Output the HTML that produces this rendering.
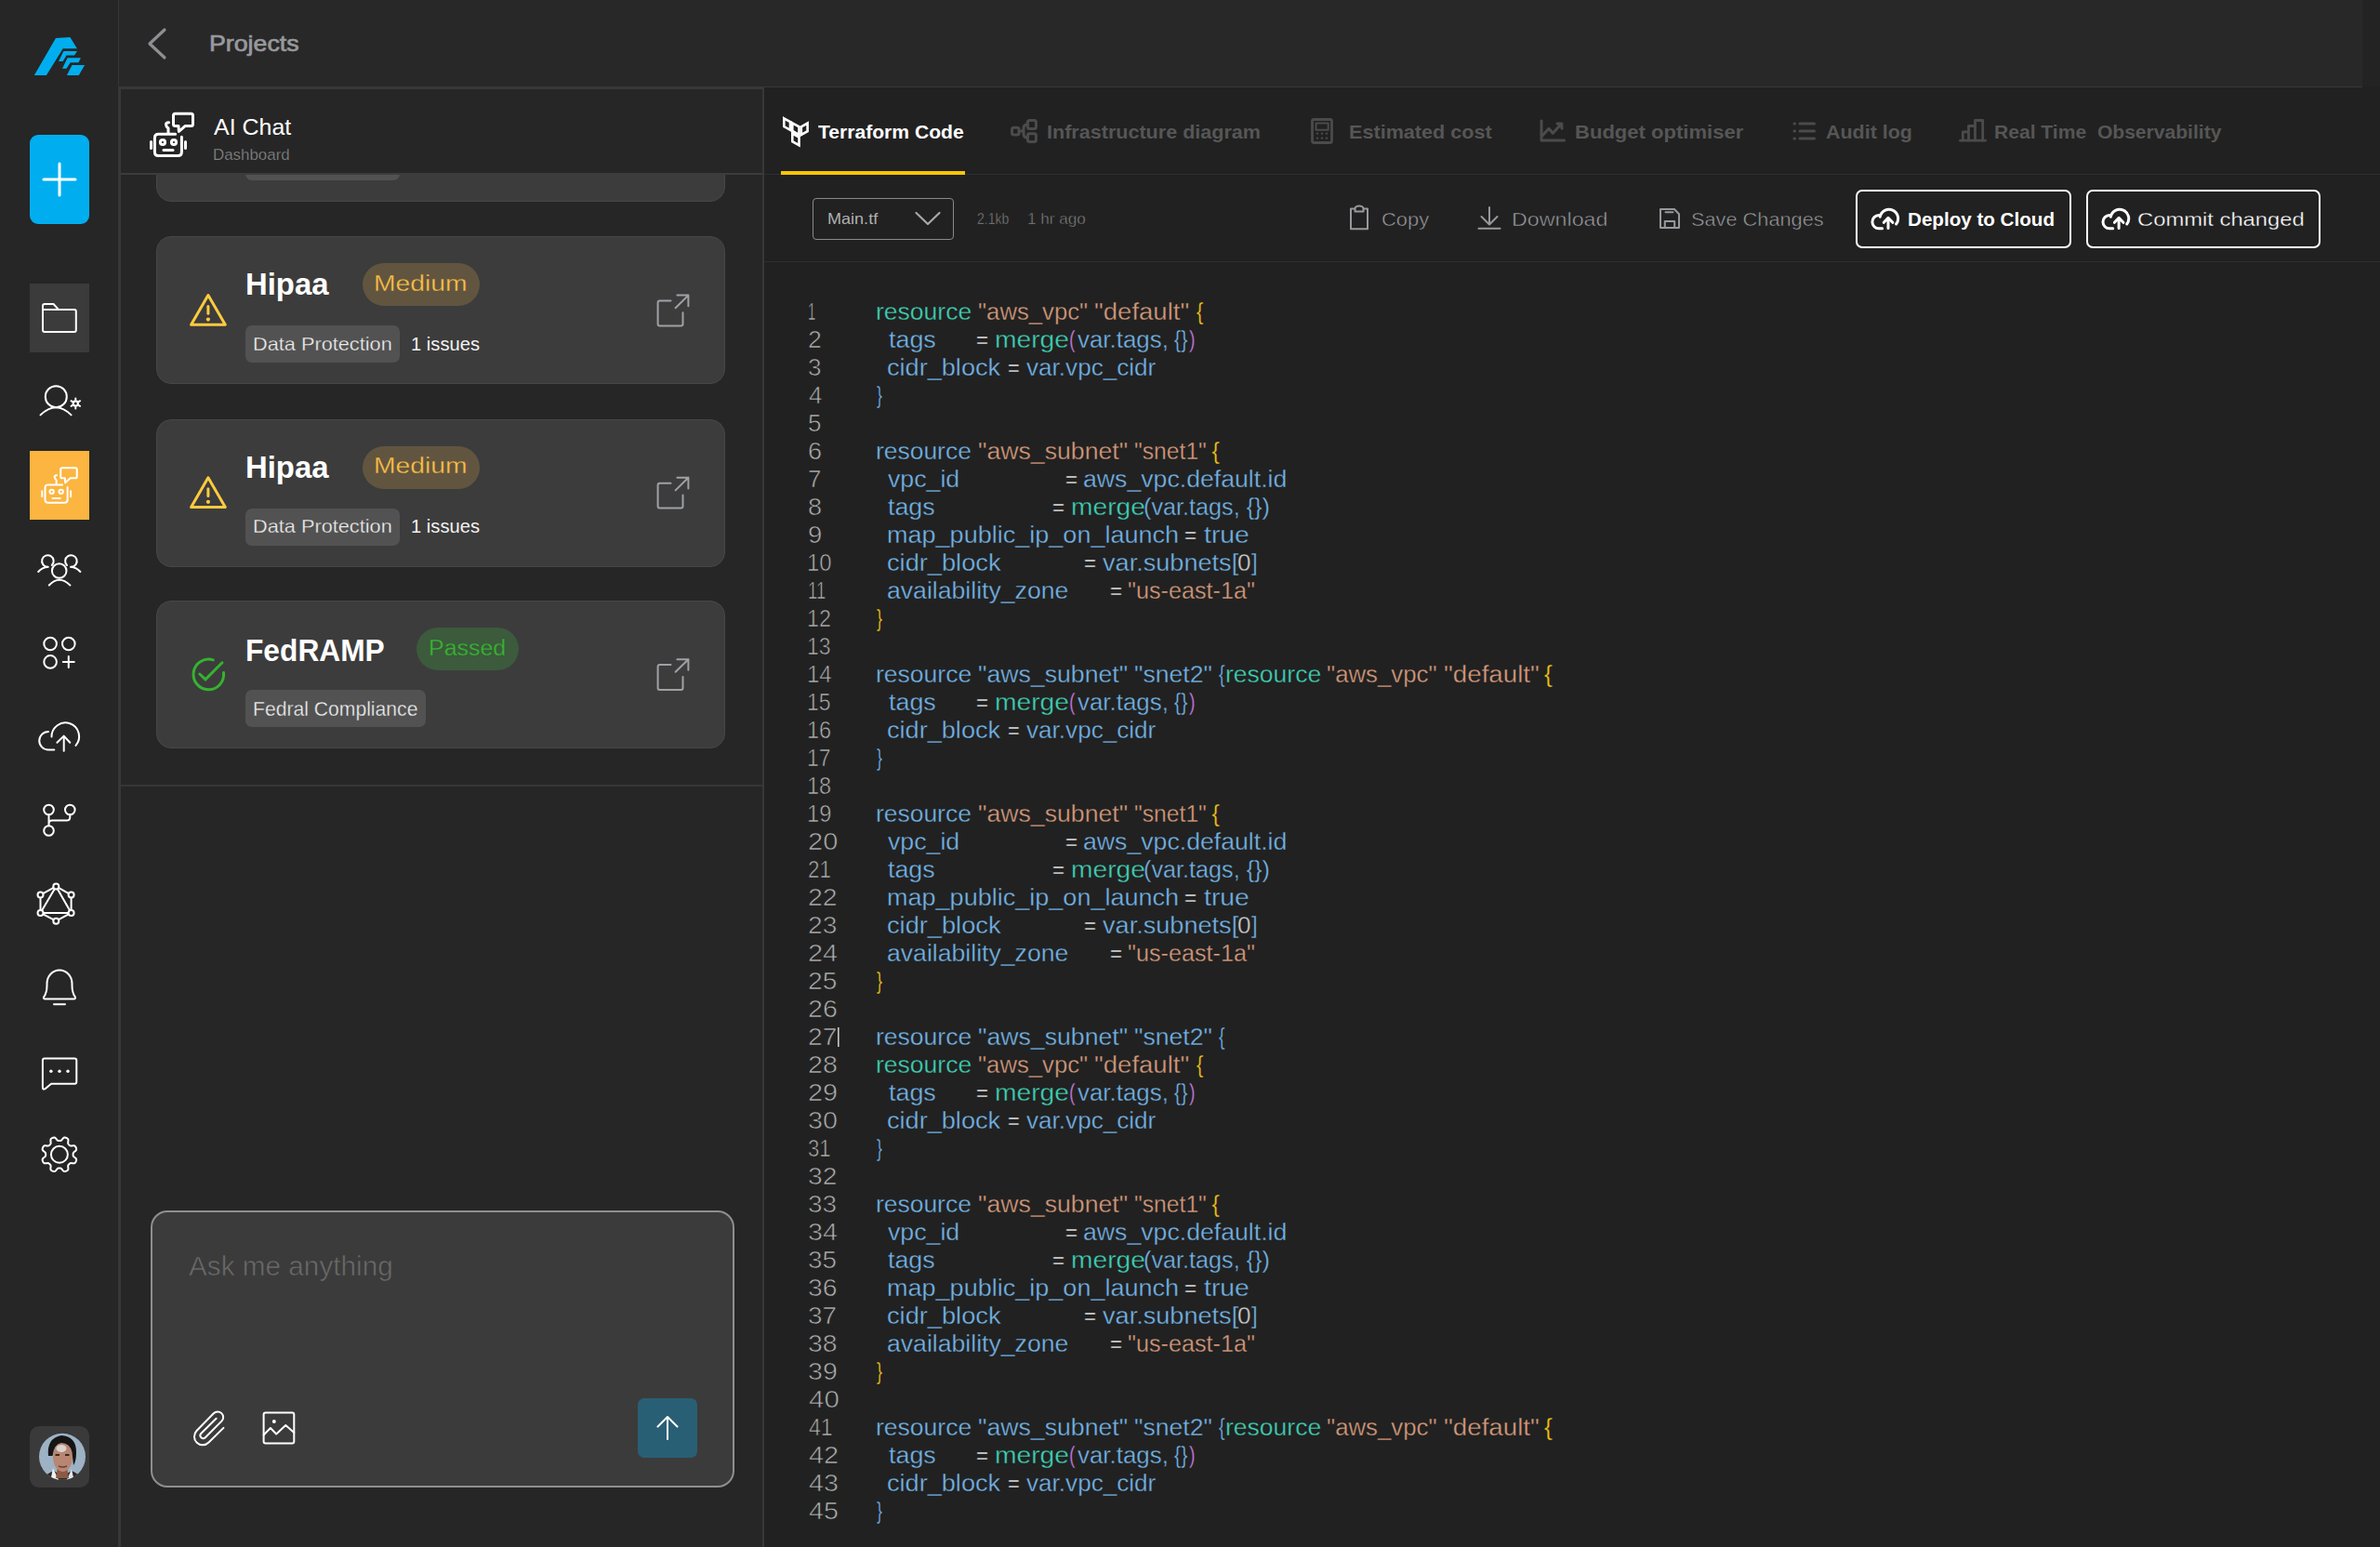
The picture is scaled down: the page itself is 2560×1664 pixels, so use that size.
<!DOCTYPE html>
<html><head><meta charset="utf-8"><style>
html,body{margin:0;padding:0;width:2560px;height:1664px;overflow:hidden;background:#212121;font-family:"Liberation Sans",sans-serif;}
.a{position:absolute;box-sizing:border-box;}
.t{position:absolute;white-space:pre;line-height:1;transform-origin:0 0;}
</style></head><body>
<div class="a" style="left:0;top:0;width:127px;height:1664px;background:#262626"></div>
<div class="a" style="left:127px;top:0;width:1px;height:1664px;background:#363638"></div>
<div class="a" style="left:128px;top:0;width:2413px;height:93px;background:#282828"></div>
<div class="a" style="left:2541px;top:0;width:19px;height:93px;background:#232323"></div>
<div class="a" style="left:128px;top:93px;width:2413px;height:1px;background:#38383a"></div>
<div class="a" style="left:128px;top:94px;width:694px;height:1570px;background:#262626"></div>
<div class="a" style="left:128px;top:93px;width:694px;height:3px;background:#38383a"></div>
<div class="a" style="left:128px;top:93px;width:2px;height:1571px;background:#38383a"></div>
<div class="a" style="left:820px;top:93px;width:2px;height:1571px;background:#38383a"></div>
<div class="a" style="left:822px;top:94px;width:1738px;height:1570px;background:#212121"></div>
<div class="a" style="left:822px;top:187px;width:1738px;height:1px;background:#2b3033"></div>
<div class="a" style="left:822px;top:281px;width:1738px;height:1px;background:#2b3033"></div>
<div class="a" style="left:840px;top:184px;width:198px;height:4px;background:#f9c606"></div>
<div class="a" style="left:130px;top:188px;width:690px;height:657px;overflow:hidden"><div class="a" style="left:38px;top:-130.0px;width:612px;height:159px;background:#3c3c3c;border:1.5px solid #474747;border-radius:16px"></div><div class="a" style="left:134px;top:-34.0px;width:166px;height:40px;background:#525252;border-radius:7px"></div><div class="a" style="left:38px;top:66.4px;width:612px;height:159px;background:#3c3c3c;border:1.5px solid #474747;border-radius:16px"></div><div class="a" style="left:134px;top:162.4px;width:166px;height:40px;background:#525252;border-radius:7px"></div><div class="a" style="left:260px;top:95.4px;width:126px;height:46px;background:#625540;border-radius:23px"></div><div class="a" style="left:38px;top:262.6px;width:612px;height:159px;background:#3c3c3c;border:1.5px solid #474747;border-radius:16px"></div><div class="a" style="left:134px;top:358.6px;width:166px;height:40px;background:#525252;border-radius:7px"></div><div class="a" style="left:260px;top:291.6px;width:126px;height:46px;background:#625540;border-radius:23px"></div><div class="a" style="left:38px;top:458.0px;width:612px;height:159px;background:#3c3c3c;border:1.5px solid #474747;border-radius:16px"></div><div class="a" style="left:134px;top:554.0px;width:194px;height:40px;background:#525252;border-radius:7px"></div><div class="a" style="left:318px;top:487.0px;width:110px;height:46px;background:#3c5a3c;border-radius:23px"></div></div>
<div class="a" style="left:130px;top:186px;width:690px;height:2px;background:#3c3c3c"></div>
<div class="a" style="left:130px;top:844px;width:690px;height:2px;background:#363636"></div>
<div class="a" style="left:162px;top:1302px;width:628px;height:298px;background:#3b3b3b;border:2px solid #8f8f8f;border-radius:18px"></div>
<div class="a" style="left:686px;top:1504px;width:64px;height:64px;background:#295f75;border-radius:7px"></div>
<div class="a" style="left:32px;top:145px;width:64px;height:96px;background:#00aeef;border-radius:9px"></div>
<div class="a" style="left:32px;top:305px;width:64px;height:74px;background:#3b3b3b"></div>
<div class="a" style="left:32px;top:485px;width:64px;height:74px;background:#fcb540"></div>
<div class="a" style="left:32px;top:1534px;width:64px;height:66px;background:#3a3a3a;border-radius:10px"></div>
<div class="a" style="left:874px;top:212.5px;width:152px;height:45px;border:1.5px solid #8a8a8a;border-radius:4px"></div>
<div class="a" style="left:1996px;top:203.5px;width:232px;height:63px;border:2px solid #ffffff;border-radius:7px"></div>
<div class="a" style="left:2244px;top:203.5px;width:252px;height:63px;border:2px solid #ffffff;border-radius:7px"></div>
<svg class="a" style="left:0;top:0" width="2560" height="1664" viewBox="0 0 2560 1664"><g fill="#00aeef"><path d="M36.8 81 L49.9 81 L67.7 52.2 L82.9 52.2 L75.4 40.1 L60 41 Z"/><path d="M63 66 L67.7 66 L71.5 59.5 L80 59.5 L83 55.1 L68.4 55.1 Z"/><path d="M67 73.8 L71.5 73.8 L75.7 67.3 L84.5 67.3 L86.9 62.3 L72.6 62.3 Z"/><path d="M71.9 81 L84.8 81 L91.1 70 L77.5 70 Z"/></g>
<g stroke="#ffffff" stroke-width="3" stroke-linecap="round"><path d="M64 176 L64 210 M47 193 L81 193"/></g>
<path d="M177 32 L161 47 L177 62" fill="none" stroke="#8e8f93" stroke-width="3.2" stroke-linecap="round" stroke-linejoin="round"/>
<path d="M46 329 Q46 327 48 327 L57.5 327 L63.2 333.1 L80 333.1 Q81.8 333.1 81.8 335 L81.8 355 Q81.8 357 80 357 L48 357 Q46 357 46 355 Z M46 333.1 L63.2 333.1" fill="none" stroke="#ffffff" stroke-linecap="round" stroke-linejoin="round" stroke-width="2"/>
<circle cx="60.3" cy="426.7" r="11.5" fill="none" stroke="#ffffff" stroke-linecap="round" stroke-linejoin="round" stroke-width="2"/><path d="M43.5 446.4 Q60.3 430 76.6 446.4" fill="none" stroke="#ffffff" stroke-linecap="round" stroke-linejoin="round" stroke-width="2"/><circle cx="81.3" cy="434" r="2.6" fill="none" stroke="#ffffff" stroke-linecap="round" stroke-linejoin="round" stroke-width="2.2"/><g stroke="#fff" stroke-width="2" stroke-linecap="round"><path d="M81.3 428.5 L81.3 429.8 M81.3 438.2 L81.3 439.5 M76.5 431.2 L77.7 431.9 M84.9 436.1 L86.1 436.8 M76.5 436.8 L77.7 436.1 M84.9 431.9 L86.1 431.2"/></g>
<g transform="translate(0,0) scale(1)" fill="none" stroke="#ffffff" stroke-linecap="round" stroke-linejoin="round" stroke-width="3"><path d="M188.7 144.2 L170.4 144.2 Q166.4 144.2 166.4 148.2 L166.4 163.4 Q166.4 167.4 170.4 167.4 L191.4 167.4 Q195.4 167.4 195.4 163.4 L195.4 147.2"/><path d="M162.5 152.4 L162.5 159.6 M199.5 152.4 L199.5 159.6"/><circle cx="175" cy="153" r="2.6"/><circle cx="187" cy="153" r="2.6"/><path d="M176 161.5 L186 161.5"/><path d="M181 143 L181 138 Q178.5 136 178.5 134 Q178.5 132 181.5 131.8"/><path d="M189 122.3 L205.5 122.3 Q207.5 122.3 207.5 124.3 L207.5 133.6 Q207.5 135.6 205.5 135.6 L199 135.6 L192.4 141.5 L192 135.6 L188.5 135.6 Q186.5 135.6 186.5 133.6 L186.5 124.3 Q186.5 122.3 188.5 122.3 Z"/></g>
<g transform="translate(-90.113,401.3736) scale(0.833)" fill="none" stroke="#ffffff" stroke-linecap="round" stroke-linejoin="round" stroke-width="2.4"><path d="M188.7 144.2 L170.4 144.2 Q166.4 144.2 166.4 148.2 L166.4 163.4 Q166.4 167.4 170.4 167.4 L191.4 167.4 Q195.4 167.4 195.4 163.4 L195.4 147.2"/><path d="M162.5 152.4 L162.5 159.6 M199.5 152.4 L199.5 159.6"/><circle cx="175" cy="153" r="2.6"/><circle cx="187" cy="153" r="2.6"/><path d="M176 161.5 L186 161.5"/><path d="M181 143 L181 138 Q178.5 136 178.5 134 Q178.5 132 181.5 131.8"/><path d="M189 122.3 L205.5 122.3 Q207.5 122.3 207.5 124.3 L207.5 133.6 Q207.5 135.6 205.5 135.6 L199 135.6 L192.4 141.5 L192 135.6 L188.5 135.6 Q186.5 135.6 186.5 133.6 L186.5 124.3 Q186.5 122.3 188.5 122.3 Z"/></g>
<g fill="none" stroke="#ffffff" stroke-linecap="round" stroke-linejoin="round" stroke-width="2"><circle cx="63.7" cy="614" r="7.8"/><path d="M52.8 629.5 Q63.7 618 75.4 629.5"/><path d="M55.8 608 A6.3 6.3 0 1 0 51 609.8"/><path d="M41.2 615 Q45 610.5 51.8 609.8"/><path d="M72 608 A6.3 6.3 0 1 1 76.8 609.8"/><path d="M86.4 615 Q82.5 610.5 76 609.8"/></g>
<g fill="none" stroke="#ffffff" stroke-linecap="round" stroke-linejoin="round" stroke-width="2"><circle cx="54.1" cy="692.5" r="6.8"/><circle cx="73.8" cy="692.5" r="6.8"/><circle cx="54.1" cy="711.9" r="6.8"/><path d="M73.8 705.9 L73.8 717.9 M67.8 711.9 L79.8 711.9"/></g>
<g fill="none" stroke="#ffffff" stroke-linecap="round" stroke-linejoin="round" stroke-width="2"><path d="M55.5 792.5 A14.8 14.8 0 1 1 81.5 801.9"/><path d="M52 787 A9.7 9.7 0 0 0 52 806.5 L58.3 806.5"/><path d="M68.7 807.8 L68.7 792 M61.4 798.8 L68.7 791.6 L75.3 798.8"/></g>
<g fill="none" stroke="#ffffff" stroke-linecap="round" stroke-linejoin="round" stroke-width="2"><circle cx="52.5" cy="871" r="5.3"/><circle cx="75.3" cy="871" r="5.3"/><circle cx="52.5" cy="893.5" r="5.3"/><path d="M52.5 876.3 L52.5 888.2 M75.3 876.3 L75.3 879 Q75.3 882.6 71.5 882.6 L56 882.6 Q52.5 882.6 52.5 886"/></g>
<g fill="none" stroke="#ffffff" stroke-linecap="round" stroke-linejoin="round" stroke-width="2"><path d="M60.3 953.4 L76.6 962.6 L76.6 981.9 L60.3 990.7 L43.5 981.9 L43.5 962.6 Z M60.3 953.4 L43.5 981.9 L76.6 981.9 Z"/></g><g fill="#262626" stroke="#fff" stroke-width="2"><circle cx="60.3" cy="953.4" r="3"/><circle cx="43.5" cy="962.6" r="3"/><circle cx="76.6" cy="962.6" r="3"/><circle cx="43.5" cy="981.9" r="3"/><circle cx="76.6" cy="981.9" r="3"/><circle cx="60.3" cy="990.7" r="3"/></g>
<g fill="none" stroke="#ffffff" stroke-linecap="round" stroke-linejoin="round" stroke-width="2"><path d="M50.5 1060 L50.5 1058 A13.5 14.5 0 0 1 77.5 1058 L77.5 1060 Q77.5 1068 81 1072.5 Q81.5 1074.5 79.5 1074.5 L48.5 1074.5 Q46.5 1074.5 47 1072.5 Q50.5 1068 50.5 1060 Z"/><path d="M58 1080.2 L70 1080.2"/></g>
<g fill="none" stroke="#ffffff" stroke-linecap="round" stroke-linejoin="round" stroke-width="2"><path d="M47.9 1138.6 L80.3 1138.6 Q82.3 1138.6 82.3 1140.6 L82.3 1163.7 Q82.3 1165.7 80.3 1165.7 L55.1 1165.7 L48.5 1171.2 Q45.9 1172.5 45.9 1169.5 L45.9 1140.6 Q45.9 1138.6 47.9 1138.6 Z"/></g><g fill="#fff"><circle cx="54.9" cy="1152.3" r="1.7"/><circle cx="64" cy="1152.3" r="1.7"/><circle cx="73" cy="1152.3" r="1.7"/></g>
<path d="M78.60 1241.80 L78.61 1242.19 L78.63 1242.57 L78.68 1242.96 L78.79 1243.36 L79.03 1243.79 L79.48 1244.27 L80.17 1244.82 L80.97 1245.43 L81.62 1246.06 L82.00 1246.65 L82.14 1247.20 L82.14 1247.73 L82.05 1248.23 L81.91 1248.71 L81.73 1249.19 L81.52 1249.65 L81.28 1250.09 L80.99 1250.51 L80.62 1250.88 L80.13 1251.17 L79.44 1251.32 L78.54 1251.30 L77.54 1251.17 L76.66 1251.07 L76.01 1251.09 L75.54 1251.22 L75.17 1251.43 L74.86 1251.67 L74.57 1251.93 L74.29 1252.19 L74.03 1252.47 L73.77 1252.76 L73.53 1253.07 L73.32 1253.44 L73.19 1253.91 L73.17 1254.56 L73.27 1255.44 L73.40 1256.44 L73.42 1257.34 L73.27 1258.03 L72.98 1258.52 L72.61 1258.89 L72.19 1259.18 L71.75 1259.42 L71.29 1259.63 L70.81 1259.81 L70.33 1259.95 L69.83 1260.04 L69.30 1260.04 L68.75 1259.90 L68.16 1259.52 L67.53 1258.87 L66.92 1258.07 L66.37 1257.38 L65.89 1256.93 L65.46 1256.69 L65.06 1256.58 L64.67 1256.53 L64.29 1256.51 L63.90 1256.50 L63.51 1256.51 L63.13 1256.53 L62.74 1256.58 L62.34 1256.69 L61.91 1256.93 L61.43 1257.38 L60.88 1258.07 L60.27 1258.87 L59.64 1259.52 L59.05 1259.90 L58.50 1260.04 L57.97 1260.04 L57.47 1259.95 L56.99 1259.81 L56.51 1259.63 L56.05 1259.42 L55.61 1259.18 L55.19 1258.89 L54.82 1258.52 L54.53 1258.03 L54.38 1257.34 L54.40 1256.44 L54.53 1255.44 L54.63 1254.56 L54.61 1253.91 L54.48 1253.44 L54.27 1253.07 L54.03 1252.76 L53.77 1252.47 L53.51 1252.19 L53.23 1251.93 L52.94 1251.67 L52.63 1251.43 L52.26 1251.22 L51.79 1251.09 L51.14 1251.07 L50.26 1251.17 L49.26 1251.30 L48.36 1251.32 L47.67 1251.17 L47.18 1250.88 L46.81 1250.51 L46.52 1250.09 L46.28 1249.65 L46.07 1249.19 L45.89 1248.71 L45.75 1248.23 L45.66 1247.73 L45.66 1247.20 L45.80 1246.65 L46.18 1246.06 L46.83 1245.43 L47.63 1244.82 L48.32 1244.27 L48.77 1243.79 L49.01 1243.36 L49.12 1242.96 L49.17 1242.57 L49.19 1242.19 L49.20 1241.80 L49.19 1241.41 L49.17 1241.03 L49.12 1240.64 L49.01 1240.24 L48.77 1239.81 L48.32 1239.33 L47.63 1238.78 L46.83 1238.17 L46.18 1237.54 L45.80 1236.95 L45.66 1236.40 L45.66 1235.87 L45.75 1235.37 L45.89 1234.89 L46.07 1234.41 L46.28 1233.95 L46.52 1233.51 L46.81 1233.09 L47.18 1232.72 L47.67 1232.43 L48.36 1232.28 L49.26 1232.30 L50.26 1232.43 L51.14 1232.53 L51.79 1232.51 L52.26 1232.38 L52.63 1232.17 L52.94 1231.93 L53.23 1231.67 L53.51 1231.41 L53.77 1231.13 L54.03 1230.84 L54.27 1230.53 L54.48 1230.16 L54.61 1229.69 L54.63 1229.04 L54.53 1228.16 L54.40 1227.16 L54.38 1226.26 L54.53 1225.57 L54.82 1225.08 L55.19 1224.71 L55.61 1224.42 L56.05 1224.18 L56.51 1223.97 L56.99 1223.79 L57.47 1223.65 L57.97 1223.56 L58.50 1223.56 L59.05 1223.70 L59.64 1224.08 L60.27 1224.73 L60.88 1225.53 L61.43 1226.22 L61.91 1226.67 L62.34 1226.91 L62.74 1227.02 L63.13 1227.07 L63.51 1227.09 L63.90 1227.10 L64.29 1227.09 L64.67 1227.07 L65.06 1227.02 L65.46 1226.91 L65.89 1226.67 L66.37 1226.22 L66.92 1225.53 L67.53 1224.73 L68.16 1224.08 L68.75 1223.70 L69.30 1223.56 L69.83 1223.56 L70.33 1223.65 L70.81 1223.79 L71.29 1223.97 L71.75 1224.18 L72.19 1224.42 L72.61 1224.71 L72.98 1225.08 L73.27 1225.57 L73.42 1226.26 L73.40 1227.16 L73.27 1228.16 L73.17 1229.04 L73.19 1229.69 L73.32 1230.16 L73.53 1230.53 L73.77 1230.84 L74.03 1231.13 L74.29 1231.41 L74.57 1231.67 L74.86 1231.93 L75.17 1232.17 L75.54 1232.38 L76.01 1232.51 L76.66 1232.53 L77.54 1232.43 L78.54 1232.30 L79.44 1232.28 L80.13 1232.43 L80.62 1232.72 L80.99 1233.09 L81.28 1233.51 L81.52 1233.95 L81.73 1234.41 L81.91 1234.89 L82.05 1235.37 L82.14 1235.87 L82.14 1236.40 L82.00 1236.95 L81.62 1237.54 L80.97 1238.17 L80.17 1238.78 L79.48 1239.33 L79.03 1239.81 L78.79 1240.24 L78.68 1240.64 L78.63 1241.03 L78.61 1241.41 Z" fill="none" stroke="#ffffff" stroke-linecap="round" stroke-linejoin="round" stroke-width="2"/><circle cx="63.9" cy="1241.8" r="9" fill="none" stroke="#ffffff" stroke-linecap="round" stroke-linejoin="round" stroke-width="2"/>
<defs><clipPath id="av"><circle cx="67" cy="1566.8" r="25"/></clipPath></defs><g clip-path="url(#av)"><rect x="40" y="1540" width="55" height="55" fill="#9db2c4"/><path d="M42 1600 Q46 1586 58 1582 L67 1588 L77 1582 Q88 1586 92 1600 Z" fill="#2e2724"/><path d="M57 1579 L64 1594 L54 1594 Z" fill="#f0f0f0"/><path d="M77 1580 L71 1594 L80 1594 Z" fill="#dfe6ee"/><path d="M62 1578 L72 1578 L74 1590 L60 1590 Z" fill="#8a5a44"/><ellipse cx="67.5" cy="1567" rx="10.5" ry="16" fill="#b98672"/><path d="M52 1566 Q50 1547 66 1544 Q82 1545 82 1562 Q82 1572 79 1576 L77.5 1562 Q75 1552 66 1552 Q58 1553 56.5 1566 Z" fill="#151515"/><ellipse cx="66" cy="1558" rx="5.5" ry="4" fill="#d9d3cf"/><path d="M59.5 1565 L64 1565 M70 1565 L74.5 1565" stroke="#3a2a22" stroke-width="2"/><path d="M63 1577 Q67.5 1579 72 1577" stroke="#6e3f3a" stroke-width="1.5" fill="none"/></g>
<g transform="translate(0,0.0)" fill="none" stroke="#fdcb3e" stroke-width="3" stroke-linecap="round" stroke-linejoin="round"><path d="M223.9 317.5 L242.3 349.3 L205.6 349.3 Z"/><path d="M223.9 329.5 L223.9 337.2"/></g><circle cx="223.9" cy="343.6" r="2.1" fill="#fdcb3e"/>
<g transform="translate(0,0.0)" fill="none" stroke="#a0a1a5" stroke-width="2" stroke-linecap="round" stroke-linejoin="round"><path d="M721.5 323.5 L709.6 323.5 Q707.6 323.5 707.6 325.5 L707.6 348.4 Q707.6 350.4 709.6 350.4 L732.5 350.4 Q734.5 350.4 734.5 348.4 L734.5 336.3"/><path d="M726.6 331.2 L740.4 317.6 M728.4 317.6 L740.4 317.6 L740.4 329.2"/></g>
<g transform="translate(0,196.20000000000002)" fill="none" stroke="#fdcb3e" stroke-width="3" stroke-linecap="round" stroke-linejoin="round"><path d="M223.9 317.5 L242.3 349.3 L205.6 349.3 Z"/><path d="M223.9 329.5 L223.9 337.2"/></g><circle cx="223.9" cy="539.8000000000001" r="2.1" fill="#fdcb3e"/>
<g transform="translate(0,196.20000000000002)" fill="none" stroke="#a0a1a5" stroke-width="2" stroke-linecap="round" stroke-linejoin="round"><path d="M721.5 323.5 L709.6 323.5 Q707.6 323.5 707.6 325.5 L707.6 348.4 Q707.6 350.4 709.6 350.4 L732.5 350.4 Q734.5 350.4 734.5 348.4 L734.5 336.3"/><path d="M726.6 331.2 L740.4 317.6 M728.4 317.6 L740.4 317.6 L740.4 329.2"/></g>
<g transform="translate(0,391.6)" fill="none" stroke="#a0a1a5" stroke-width="2" stroke-linecap="round" stroke-linejoin="round"><path d="M721.5 323.5 L709.6 323.5 Q707.6 323.5 707.6 325.5 L707.6 348.4 Q707.6 350.4 709.6 350.4 L732.5 350.4 Q734.5 350.4 734.5 348.4 L734.5 336.3"/><path d="M726.6 331.2 L740.4 317.6 M728.4 317.6 L740.4 317.6 L740.4 329.2"/></g>
<g fill="none" stroke="#35b22f" stroke-width="3" stroke-linecap="round"><path d="M229.3 709.9 A16.3 16.3 0 1 0 240.5 723.5"/><path d="M214.8 725 L221 730.9 L239 712.8"/></g>
<g fill="none" stroke="#ffffff" stroke-linecap="round" stroke-linejoin="round" stroke-width="2"><path d="M240.4 1535.9 L224.5 1551.5 A9 9 0 0 1 211.5 1539 L229.8 1520.2 A6 6 0 0 1 238.4 1528.6 L220.8 1546.2 A3 3 0 0 1 216.4 1541.8 L232.6 1525.8"/></g>
<g fill="none" stroke="#ffffff" stroke-linecap="round" stroke-linejoin="round" stroke-width="2"><rect x="283.6" y="1519.5" width="32.7" height="33" rx="2"/><path d="M283.6 1543.5 L290.9 1536 L297.2 1542.5 L307.3 1533 L316.3 1541"/></g><circle cx="294.8" cy="1529" r="2" fill="#fff"/>
<g fill="none" stroke="#ffffff" stroke-linecap="round" stroke-linejoin="round" stroke-width="2"><path d="M718 1548 L718 1524 M707.5 1534.5 L718 1524 L728.5 1534.5"/></g>
<g fill="none" stroke="#ffffff" stroke-width="2.6" stroke-linejoin="miter"><path d="M843.3 127.3 L850 131 L850 139.8 L843.3 136.1 Z"/><path d="M852.3 132.3 L859.5 136.3 L859.5 145 L852.3 141 Z"/><path d="M861.8 136.3 L868.6 132.5 L868.6 141.2 L861.8 145 Z"/><path d="M852.3 143.5 L859.5 147.5 L859.5 156.2 L852.3 152.2 Z"/></g>
<g fill="none" stroke="#4b4b4b" stroke-linecap="round" stroke-linejoin="round" stroke-width="3"><rect x="1088.5" y="137.2" width="7.5" height="7.7" rx="2"/><rect x="1105.4" y="129.4" width="9" height="9" rx="2"/><rect x="1105.4" y="143.8" width="9" height="8.8" rx="2"/><path d="M1096 141 L1101 141 M1105 134 Q1101 134 1101 138 L1101 144 Q1101 148 1105 148"/></g>
<g fill="none" stroke="#4b4b4b" stroke-linecap="round" stroke-linejoin="round" stroke-width="2.8"><rect x="1411.5" y="128.5" width="21" height="25" rx="2"/></g><g fill="none" stroke="#4b4b4b" stroke-linecap="round" stroke-linejoin="round" stroke-width="2"><rect x="1415.5" y="132.5" width="13.2" height="7.2"/></g><g fill="#4b4b4b"><circle cx="1417" cy="143.6" r="1.2"/><circle cx="1422" cy="143.6" r="1.2"/><circle cx="1427" cy="143.6" r="1.2"/><circle cx="1417" cy="148.6" r="1.2"/><circle cx="1422" cy="148.6" r="1.2"/><circle cx="1427" cy="148.6" r="1.2"/></g>
<g fill="none" stroke="#4b4b4b" stroke-linecap="round" stroke-linejoin="round" stroke-width="3"><path d="M1658 130 L1658 151 L1682.5 151 M1658 147 L1666 138.3 L1670.3 143.3 L1679.5 133.3 M1675 133 L1679.8 133 L1680 138.3"/></g>
<g fill="none" stroke="#4b4b4b" stroke-linecap="round" stroke-linejoin="round" stroke-width="3"><path d="M1930 132.9 L1930.5 132.9 M1936 132.9 L1951.5 132.9 M1930 141 L1930.5 141 M1936 141 L1951.5 141 M1930 149 L1930.5 149 M1936 149 L1951.5 149"/></g>
<g fill="none" stroke="#4b4b4b" stroke-linecap="round" stroke-linejoin="round" stroke-width="2.8"><path d="M2108.5 151.2 L2135.5 151.2" transform="translate(0,0)"/></g>
<g fill="none" stroke="#4b4b4b" stroke-linecap="round" stroke-linejoin="round" stroke-width="2.8"><path d="M2111.3 151 L2111.3 141.8 L2117.5 141.8 L2117.5 151 M2117.5 141.8 L2117.5 135.5 L2124.5 135.5 L2124.5 151 M2124.5 135.5 L2124.5 129.5 L2132.7 129.5 L2132.7 151"/></g>
<g fill="none" stroke="#98999d" stroke-linecap="round" stroke-linejoin="round" stroke-width="2"><path d="M1457 224.5 L1453 224.5 L1453 246.2 L1471 246.2 L1471 224.5 L1467 224.5"/><path d="M1457.5 227.5 L1466.5 227.5 L1466.5 224.5 A4.5 3 0 0 0 1457.5 224.5 Z"/></g>
<g fill="none" stroke="#98999d" stroke-linecap="round" stroke-linejoin="round" stroke-width="2"><path d="M1602 223 L1602 241 M1593.5 233 L1602 241.5 L1610.5 233 M1590.5 245.8 L1613.5 245.8"/></g>
<g fill="none" stroke="#98999d" stroke-linecap="round" stroke-linejoin="round" stroke-width="2"><path d="M1786 225 L1801 225 L1806 230.3 L1806 245 L1786 245 Z M1791.5 228.2 L1799.5 228.2 M1790.8 245 L1790.8 238 L1801.2 238 L1801.2 245"/></g>
<g transform="translate(0,0)" fill="none" stroke="#ffffff" stroke-width="3" stroke-linecap="round" stroke-linejoin="round"><path d="M2022.2 233.2 A9.8 9.8 0 1 1 2039.6 241"/><path d="M2021 231.6 A7.1 7.1 0 0 0 2021 245.8 L2024.6 245.8"/><path d="M2031 245.5 L2031 234.5 M2026.3 239.3 L2031 234.3 L2035.8 239.3"/></g>
<g transform="translate(248.0999999999999,0)" fill="none" stroke="#ffffff" stroke-width="3" stroke-linecap="round" stroke-linejoin="round"><path d="M2022.2 233.2 A9.8 9.8 0 1 1 2039.6 241"/><path d="M2021 231.6 A7.1 7.1 0 0 0 2021 245.8 L2024.6 245.8"/><path d="M2031 245.5 L2031 234.5 M2026.3 239.3 L2031 234.3 L2035.8 239.3"/></g>
<path d="M985.5 229 L998 241 L1010.5 229" fill="none" stroke="#a8a8a8" stroke-width="2.2" stroke-linecap="round" stroke-linejoin="round"/>
<rect x="901" y="1105" width="1.6" height="21" fill="#c8c8c8"/></svg>
<div class="t" style="left:225.17px;top:34.68px;font-size:24px;-webkit-text-stroke:0.7px #98999d;color:#98999d;transform:scaleX(1.1143)">Projects</div>
<div class="t" style="left:229.60px;top:125.18px;font-size:24.6px;color:#ffffff;transform:scaleX(1.0146)">AI Chat</div>
<div class="t" style="left:228.96px;top:158.10px;font-size:16.3px;-webkit-text-stroke:0.25px #262626;color:#858585;transform:scaleX(1.0385)">Dashboard</div>
<div class="t" style="left:263.96px;top:289.30px;font-size:33.9px;font-weight:700;color:#ffffff;transform:scaleX(0.9692)">Hipaa</div>
<div class="t" style="left:402.11px;top:292.99px;font-size:24.7px;-webkit-text-stroke:0.3px #625540;color:#fbbf45;transform:scaleX(1.1459)">Medium</div>
<div class="t" style="left:271.86px;top:360.21px;font-size:20.9px;-webkit-text-stroke:0.3px #525252;color:#eeeeee;transform:scaleX(1.0401)">Data Protection</div>
<div class="t" style="left:441.93px;top:360.21px;font-size:20.9px;color:#f2f2f2;transform:scaleX(0.9653)">1 issues</div>
<div class="t" style="left:263.96px;top:485.50px;font-size:33.9px;font-weight:700;color:#ffffff;transform:scaleX(0.9692)">Hipaa</div>
<div class="t" style="left:402.11px;top:489.19px;font-size:24.7px;-webkit-text-stroke:0.3px #625540;color:#fbbf45;transform:scaleX(1.1459)">Medium</div>
<div class="t" style="left:271.86px;top:556.41px;font-size:20.9px;-webkit-text-stroke:0.3px #525252;color:#eeeeee;transform:scaleX(1.0401)">Data Protection</div>
<div class="t" style="left:441.93px;top:556.41px;font-size:20.9px;color:#f2f2f2;transform:scaleX(0.9653)">1 issues</div>
<div class="t" style="left:263.73px;top:681.52px;font-size:34px;font-weight:700;color:#ffffff;transform:scaleX(0.9329)">FedRAMP</div>
<div class="t" style="left:460.98px;top:684.89px;font-size:24.7px;-webkit-text-stroke:0.3px #3c5a3c;color:#36b530;transform:scaleX(1.0101)">Passed</div>
<div class="t" style="left:272.10px;top:752.15px;font-size:21.2px;-webkit-text-stroke:0.3px #525252;color:#eeeeee;transform:scaleX(0.9977)">Fedral Compliance</div>
<div class="t" style="left:202.90px;top:1346.87px;font-size:29.8px;-webkit-text-stroke:0.6px #3b3b3b;color:#6a6a6a;transform:scaleX(0.9973)">Ask me anything</div>
<div class="t" style="left:880.00px;top:131.72px;font-size:20.3px;font-weight:700;color:#ffffff;transform:scaleX(1.0400)">Terraform Code</div>
<div class="t" style="left:1125.83px;top:131.89px;font-size:20.1px;font-weight:700;color:#565656;transform:scaleX(1.0728)">Infrastructure diagram</div>
<div class="t" style="left:1450.92px;top:131.89px;font-size:20.1px;font-weight:700;color:#565656;transform:scaleX(1.0754)">Estimated cost</div>
<div class="t" style="left:1693.90px;top:131.89px;font-size:20.1px;font-weight:700;color:#565656;transform:scaleX(1.0976)">Budget optimiser</div>
<div class="t" style="left:1964.00px;top:131.89px;font-size:20.1px;font-weight:700;color:#565656;transform:scaleX(1.0674)">Audit log</div>
<div class="t" style="left:2145.45px;top:131.89px;font-size:20.1px;font-weight:700;color:#565656;transform:scaleX(1.0487)">Real Time  Observability</div>
<div class="t" style="left:889.61px;top:226.83px;font-size:16.5px;color:#b0b0b0;transform:scaleX(1.0939)">Main.tf</div>
<div class="t" style="left:1050.90px;top:226.83px;font-size:16.5px;-webkit-text-stroke:0.5px #212121;color:#8c8c8c;transform:scaleX(0.8500)">2.1kb</div>
<div class="t" style="left:1104.66px;top:226.83px;font-size:16.5px;-webkit-text-stroke:0.5px #212121;color:#8c8c8c;transform:scaleX(1.0373)">1 hr ago</div>
<div class="t" style="left:1485.74px;top:225.76px;font-size:20.6px;-webkit-text-stroke:0.5px #212121;color:#9c9da1;transform:scaleX(1.0638)">Copy</div>
<div class="t" style="left:1626.37px;top:225.76px;font-size:20.6px;-webkit-text-stroke:0.5px #212121;color:#9c9da1;transform:scaleX(1.1300)">Download</div>
<div class="t" style="left:1819.44px;top:225.76px;font-size:20.6px;-webkit-text-stroke:0.5px #212121;color:#9c9da1;transform:scaleX(1.0560)">Save Changes</div>
<div class="t" style="left:2052.48px;top:225.82px;font-size:20.3px;font-weight:700;color:#ffffff;transform:scaleX(1.0162)">Deploy to Cloud</div>
<div class="t" style="left:2299.13px;top:225.82px;font-size:20.3px;-webkit-text-stroke:0.3px #212121;color:#ffffff;transform:scaleX(1.1722)">Commit changed</div>
<div class="t" style="left:868.82px;top:322.84px;font-size:25px;-webkit-text-stroke:0.6px #212121;color:#b0b0b0;transform:scaleX(0.5909)">1</div>
<div class="t" style="left:868.93px;top:352.84px;font-size:25px;-webkit-text-stroke:0.6px #212121;color:#b0b0b0;transform:scaleX(1.0667)">2</div>
<div class="t" style="left:868.96px;top:382.84px;font-size:25px;-webkit-text-stroke:0.6px #212121;color:#b0b0b0;transform:scaleX(1.0417)">3</div>
<div class="t" style="left:870.00px;top:412.84px;font-size:25px;-webkit-text-stroke:0.6px #212121;color:#b0b0b0;transform:scaleX(1.0357)">4</div>
<div class="t" style="left:868.96px;top:442.84px;font-size:25px;-webkit-text-stroke:0.6px #212121;color:#b0b0b0;transform:scaleX(1.0417)">5</div>
<div class="t" style="left:868.92px;top:472.84px;font-size:25px;-webkit-text-stroke:0.6px #212121;color:#b0b0b0;transform:scaleX(1.0833)">6</div>
<div class="t" style="left:868.96px;top:502.84px;font-size:25px;-webkit-text-stroke:0.6px #212121;color:#b0b0b0;transform:scaleX(1.0417)">7</div>
<div class="t" style="left:868.92px;top:532.84px;font-size:25px;-webkit-text-stroke:0.6px #212121;color:#b0b0b0;transform:scaleX(1.0833)">8</div>
<div class="t" style="left:868.90px;top:562.84px;font-size:25px;-webkit-text-stroke:0.6px #212121;color:#b0b0b0;transform:scaleX(1.1000)">9</div>
<div class="t" style="left:868.09px;top:592.84px;font-size:25px;-webkit-text-stroke:0.6px #212121;color:#b0b0b0;transform:scaleX(0.9560)">10</div>
<div class="t" style="left:868.52px;top:622.84px;font-size:25px;-webkit-text-stroke:0.6px #212121;color:#b0b0b0;transform:scaleX(0.7391)">11</div>
<div class="t" style="left:868.14px;top:652.84px;font-size:25px;-webkit-text-stroke:0.6px #212121;color:#b0b0b0;transform:scaleX(0.9320)">12</div>
<div class="t" style="left:868.16px;top:682.84px;font-size:25px;-webkit-text-stroke:0.6px #212121;color:#b0b0b0;transform:scaleX(0.9200)">13</div>
<div class="t" style="left:868.08px;top:712.84px;font-size:25px;-webkit-text-stroke:0.6px #212121;color:#b0b0b0;transform:scaleX(0.9615)">14</div>
<div class="t" style="left:868.16px;top:742.84px;font-size:25px;-webkit-text-stroke:0.6px #212121;color:#b0b0b0;transform:scaleX(0.9200)">15</div>
<div class="t" style="left:868.12px;top:772.84px;font-size:25px;-webkit-text-stroke:0.6px #212121;color:#b0b0b0;transform:scaleX(0.9400)">16</div>
<div class="t" style="left:868.16px;top:802.84px;font-size:25px;-webkit-text-stroke:0.6px #212121;color:#b0b0b0;transform:scaleX(0.9200)">17</div>
<div class="t" style="left:868.12px;top:832.84px;font-size:25px;-webkit-text-stroke:0.6px #212121;color:#b0b0b0;transform:scaleX(0.9400)">18</div>
<div class="t" style="left:868.10px;top:862.84px;font-size:25px;-webkit-text-stroke:0.6px #212121;color:#b0b0b0;transform:scaleX(0.9480)">19</div>
<div class="t" style="left:868.84px;top:892.84px;font-size:25px;-webkit-text-stroke:0.6px #212121;color:#b0b0b0;transform:scaleX(1.1615)">20</div>
<div class="t" style="left:869.10px;top:922.84px;font-size:25px;-webkit-text-stroke:0.6px #212121;color:#b0b0b0;transform:scaleX(0.8962)">21</div>
<div class="t" style="left:868.86px;top:952.84px;font-size:25px;-webkit-text-stroke:0.6px #212121;color:#b0b0b0;transform:scaleX(1.1385)">22</div>
<div class="t" style="left:868.87px;top:982.84px;font-size:25px;-webkit-text-stroke:0.6px #212121;color:#b0b0b0;transform:scaleX(1.1269)">23</div>
<div class="t" style="left:868.84px;top:1012.84px;font-size:25px;-webkit-text-stroke:0.6px #212121;color:#b0b0b0;transform:scaleX(1.1593)">24</div>
<div class="t" style="left:868.87px;top:1042.84px;font-size:25px;-webkit-text-stroke:0.6px #212121;color:#b0b0b0;transform:scaleX(1.1269)">25</div>
<div class="t" style="left:868.85px;top:1072.84px;font-size:25px;-webkit-text-stroke:0.6px #212121;color:#b0b0b0;transform:scaleX(1.1462)">26</div>
<div class="t" style="left:868.87px;top:1102.84px;font-size:25px;-webkit-text-stroke:0.6px #212121;color:#b0b0b0;transform:scaleX(1.1269)">27</div>
<div class="t" style="left:868.85px;top:1132.84px;font-size:25px;-webkit-text-stroke:0.6px #212121;color:#b0b0b0;transform:scaleX(1.1462)">28</div>
<div class="t" style="left:868.85px;top:1162.84px;font-size:25px;-webkit-text-stroke:0.6px #212121;color:#b0b0b0;transform:scaleX(1.1538)">29</div>
<div class="t" style="left:868.85px;top:1192.84px;font-size:25px;-webkit-text-stroke:0.6px #212121;color:#b0b0b0;transform:scaleX(1.1500)">30</div>
<div class="t" style="left:869.12px;top:1222.84px;font-size:25px;-webkit-text-stroke:0.6px #212121;color:#b0b0b0;transform:scaleX(0.8846)">31</div>
<div class="t" style="left:868.87px;top:1252.84px;font-size:25px;-webkit-text-stroke:0.6px #212121;color:#b0b0b0;transform:scaleX(1.1269)">32</div>
<div class="t" style="left:868.88px;top:1282.84px;font-size:25px;-webkit-text-stroke:0.6px #212121;color:#b0b0b0;transform:scaleX(1.1154)">33</div>
<div class="t" style="left:868.85px;top:1312.84px;font-size:25px;-webkit-text-stroke:0.6px #212121;color:#b0b0b0;transform:scaleX(1.1481)">34</div>
<div class="t" style="left:868.88px;top:1342.84px;font-size:25px;-webkit-text-stroke:0.6px #212121;color:#b0b0b0;transform:scaleX(1.1154)">35</div>
<div class="t" style="left:868.87px;top:1372.84px;font-size:25px;-webkit-text-stroke:0.6px #212121;color:#b0b0b0;transform:scaleX(1.1346)">36</div>
<div class="t" style="left:868.88px;top:1402.84px;font-size:25px;-webkit-text-stroke:0.6px #212121;color:#b0b0b0;transform:scaleX(1.1154)">37</div>
<div class="t" style="left:868.87px;top:1432.84px;font-size:25px;-webkit-text-stroke:0.6px #212121;color:#b0b0b0;transform:scaleX(1.1346)">38</div>
<div class="t" style="left:868.86px;top:1462.84px;font-size:25px;-webkit-text-stroke:0.6px #212121;color:#b0b0b0;transform:scaleX(1.1423)">39</div>
<div class="t" style="left:870.00px;top:1492.84px;font-size:25px;-webkit-text-stroke:0.6px #212121;color:#b0b0b0;transform:scaleX(1.1815)">40</div>
<div class="t" style="left:870.00px;top:1522.84px;font-size:25px;-webkit-text-stroke:0.6px #212121;color:#b0b0b0;transform:scaleX(0.9259)">41</div>
<div class="t" style="left:870.00px;top:1552.84px;font-size:25px;-webkit-text-stroke:0.6px #212121;color:#b0b0b0;transform:scaleX(1.1593)">42</div>
<div class="t" style="left:870.00px;top:1582.84px;font-size:25px;-webkit-text-stroke:0.6px #212121;color:#b0b0b0;transform:scaleX(1.1481)">43</div>
<div class="t" style="left:870.00px;top:1612.84px;font-size:25px;-webkit-text-stroke:0.6px #212121;color:#b0b0b0;transform:scaleX(1.1481)">45</div>
<div class="t" style="left:942.14px;top:322.84px;font-size:25px;-webkit-text-stroke:0.3px #212121;color:#3fcfb1;transform:scaleX(1.0604)">resource</div>
<div class="t" style="left:1051.87px;top:322.84px;font-size:25px;-webkit-text-stroke:0.3px #212121;color:#d3987a;transform:scaleX(1.0272)">&quot;aws_vpc&quot;</div>
<div class="t" style="left:1177.10px;top:322.84px;font-size:25px;-webkit-text-stroke:0.3px #212121;color:#d3987a;transform:scaleX(1.1011)">&quot;default&quot;</div>
<div class="t" style="left:1287.00px;top:322.84px;font-size:25px;-webkit-text-stroke:0.3px #212121;color:#f5c518;transform:scaleX(0.8750)">{</div>
<div class="t" style="left:955.50px;top:352.84px;font-size:25px;-webkit-text-stroke:0.3px #212121;color:#72b2e4;transform:scaleX(1.0745)">tags</div>
<div class="t" style="left:1050.41px;top:352.84px;font-size:25px;-webkit-text-stroke:0.3px #212121;color:#f0f0f0;transform:scaleX(0.8923)">=</div>
<div class="t" style="left:1070.27px;top:352.84px;font-size:25px;-webkit-text-stroke:0.3px #212121;color:#3fcfb1;transform:scaleX(1.1290)">merge</div>
<div class="t" style="left:1149.71px;top:352.84px;font-size:25px;-webkit-text-stroke:0.3px #212121;color:#c678dd;transform:scaleX(0.7857)">(</div>
<div class="t" style="left:1158.70px;top:352.84px;font-size:25px;-webkit-text-stroke:0.3px #212121;color:#72b2e4;transform:scaleX(1.0355)">var.tags,</div>
<div class="t" style="left:1263.30px;top:352.84px;font-size:25px;-webkit-text-stroke:0.3px #212121;color:#72b2e4;transform:scaleX(0.8588)">{}</div>
<div class="t" style="left:1279.00px;top:352.84px;font-size:25px;-webkit-text-stroke:0.3px #212121;color:#c678dd;transform:scaleX(0.7857)">)</div>
<div class="t" style="left:954.42px;top:382.84px;font-size:25px;-webkit-text-stroke:0.3px #212121;color:#72b2e4;transform:scaleX(1.0848)">cidr_block</div>
<div class="t" style="left:1084.13px;top:382.84px;font-size:25px;-webkit-text-stroke:0.3px #212121;color:#f0f0f0;transform:scaleX(0.8692)">=</div>
<div class="t" style="left:1104.00px;top:382.84px;font-size:25px;-webkit-text-stroke:0.3px #212121;color:#72b2e4;transform:scaleX(1.0444)">var.vpc_cidr</div>
<div class="t" style="left:943.20px;top:412.84px;font-size:25px;-webkit-text-stroke:0.3px #212121;color:#72b2e4;transform:scaleX(0.7125)">}</div>
<div class="t" style="left:942.44px;top:472.84px;font-size:25px;-webkit-text-stroke:0.3px #212121;color:#72b2e4;transform:scaleX(1.0573)">resource</div>
<div class="t" style="left:1051.83px;top:472.84px;font-size:25px;-webkit-text-stroke:0.3px #212121;color:#d3987a;transform:scaleX(1.0660)">&quot;aws_subnet&quot;</div>
<div class="t" style="left:1219.81px;top:472.84px;font-size:25px;-webkit-text-stroke:0.3px #212121;color:#d3987a;transform:scaleX(0.9870)">&quot;snet1&quot;</div>
<div class="t" style="left:1303.60px;top:472.84px;font-size:25px;-webkit-text-stroke:0.3px #212121;color:#f5c518;transform:scaleX(1.0000)">{</div>
<div class="t" style="left:954.80px;top:502.84px;font-size:25px;-webkit-text-stroke:0.3px #212121;color:#72b2e4;transform:scaleX(1.0676)">vpc_id</div>
<div class="t" style="left:1145.51px;top:502.84px;font-size:25px;-webkit-text-stroke:0.3px #212121;color:#f0f0f0;transform:scaleX(0.8923)">=</div>
<div class="t" style="left:1164.83px;top:502.84px;font-size:25px;-webkit-text-stroke:0.3px #212121;color:#72b2e4;transform:scaleX(1.0665)">aws_vpc.default.id</div>
<div class="t" style="left:954.80px;top:532.84px;font-size:25px;-webkit-text-stroke:0.3px #212121;color:#72b2e4;transform:scaleX(1.0723)">tags</div>
<div class="t" style="left:1132.11px;top:532.84px;font-size:25px;-webkit-text-stroke:0.3px #212121;color:#f0f0f0;transform:scaleX(0.8923)">=</div>
<div class="t" style="left:1152.07px;top:532.84px;font-size:25px;-webkit-text-stroke:0.3px #212121;color:#3fcfb1;transform:scaleX(1.1275)">merge</div>
<div class="t" style="left:1230.49px;top:532.84px;font-size:25px;-webkit-text-stroke:0.3px #212121;color:#72b2e4;transform:scaleX(1.0083)">(var.tags, {})</div>
<div class="t" style="left:953.72px;top:562.84px;font-size:25px;-webkit-text-stroke:0.3px #212121;color:#72b2e4;transform:scaleX(1.0813)">map_public_ip_on_launch</div>
<div class="t" style="left:1274.40px;top:562.84px;font-size:25px;-webkit-text-stroke:0.3px #212121;color:#f0f0f0;transform:scaleX(0.9000)">=</div>
<div class="t" style="left:1294.50px;top:562.84px;font-size:25px;-webkit-text-stroke:0.3px #212121;color:#72b2e4;transform:scaleX(1.1349)">true</div>
<div class="t" style="left:953.71px;top:592.84px;font-size:25px;-webkit-text-stroke:0.3px #212121;color:#72b2e4;transform:scaleX(1.0884)">cidr_block</div>
<div class="t" style="left:1165.91px;top:592.84px;font-size:25px;-webkit-text-stroke:0.3px #212121;color:#f0f0f0;transform:scaleX(0.8923)">=</div>
<div class="t" style="left:1185.60px;top:592.84px;font-size:25px;-webkit-text-stroke:0.3px #212121;color:#72b2e4;transform:scaleX(1.0844)">var.subnets[</div>
<div class="t" style="left:1331.46px;top:592.84px;font-size:25px;-webkit-text-stroke:0.3px #212121;color:#c8c8c8;transform:scaleX(1.0417)">0</div>
<div class="t" style="left:1345.50px;top:592.84px;font-size:25px;-webkit-text-stroke:0.3px #212121;color:#72b2e4;transform:scaleX(0.9667)">]</div>
<div class="t" style="left:953.74px;top:622.84px;font-size:25px;-webkit-text-stroke:0.3px #212121;color:#72b2e4;transform:scaleX(1.0648)">availability_zone</div>
<div class="t" style="left:1193.81px;top:622.84px;font-size:25px;-webkit-text-stroke:0.3px #212121;color:#f0f0f0;transform:scaleX(0.8923)">=</div>
<div class="t" style="left:1212.99px;top:622.84px;font-size:25px;-webkit-text-stroke:0.3px #212121;color:#d3987a;transform:scaleX(1.0075)">&quot;us-east-1a&quot;</div>
<div class="t" style="left:942.80px;top:652.84px;font-size:25px;-webkit-text-stroke:0.3px #212121;color:#f5c518;transform:scaleX(0.7125)">}</div>
<div class="t" style="left:942.14px;top:712.84px;font-size:25px;-webkit-text-stroke:0.3px #212121;color:#72b2e4;transform:scaleX(1.0604)">resource</div>
<div class="t" style="left:1051.83px;top:712.84px;font-size:25px;-webkit-text-stroke:0.3px #212121;color:#72b2e4;transform:scaleX(1.0660)">&quot;aws_subnet&quot;</div>
<div class="t" style="left:1219.94px;top:712.84px;font-size:25px;-webkit-text-stroke:0.3px #212121;color:#72b2e4;transform:scaleX(1.0636)">&quot;snet2&quot;</div>
<div class="t" style="left:1311.30px;top:712.84px;font-size:25px;-webkit-text-stroke:0.3px #212121;color:#72b2e4;transform:scaleX(0.7875)">{</div>
<div class="t" style="left:1317.64px;top:712.84px;font-size:25px;-webkit-text-stroke:0.3px #212121;color:#3fcfb1;transform:scaleX(1.0604)">resource</div>
<div class="t" style="left:1426.87px;top:712.84px;font-size:25px;-webkit-text-stroke:0.3px #212121;color:#d3987a;transform:scaleX(1.0316)">&quot;aws_vpc&quot;</div>
<div class="t" style="left:1552.89px;top:712.84px;font-size:25px;-webkit-text-stroke:0.3px #212121;color:#d3987a;transform:scaleX(1.1077)">&quot;default&quot;</div>
<div class="t" style="left:1661.00px;top:712.84px;font-size:25px;-webkit-text-stroke:0.3px #212121;color:#f5c518;transform:scaleX(1.0625)">{</div>
<div class="t" style="left:955.50px;top:742.84px;font-size:25px;-webkit-text-stroke:0.3px #212121;color:#72b2e4;transform:scaleX(1.0745)">tags</div>
<div class="t" style="left:1050.41px;top:742.84px;font-size:25px;-webkit-text-stroke:0.3px #212121;color:#f0f0f0;transform:scaleX(0.8923)">=</div>
<div class="t" style="left:1070.27px;top:742.84px;font-size:25px;-webkit-text-stroke:0.3px #212121;color:#3fcfb1;transform:scaleX(1.1290)">merge</div>
<div class="t" style="left:1149.71px;top:742.84px;font-size:25px;-webkit-text-stroke:0.3px #212121;color:#c678dd;transform:scaleX(0.7857)">(</div>
<div class="t" style="left:1158.70px;top:742.84px;font-size:25px;-webkit-text-stroke:0.3px #212121;color:#72b2e4;transform:scaleX(1.0355)">var.tags,</div>
<div class="t" style="left:1263.30px;top:742.84px;font-size:25px;-webkit-text-stroke:0.3px #212121;color:#72b2e4;transform:scaleX(0.8588)">{}</div>
<div class="t" style="left:1279.00px;top:742.84px;font-size:25px;-webkit-text-stroke:0.3px #212121;color:#c678dd;transform:scaleX(0.7857)">)</div>
<div class="t" style="left:954.42px;top:772.84px;font-size:25px;-webkit-text-stroke:0.3px #212121;color:#72b2e4;transform:scaleX(1.0848)">cidr_block</div>
<div class="t" style="left:1084.13px;top:772.84px;font-size:25px;-webkit-text-stroke:0.3px #212121;color:#f0f0f0;transform:scaleX(0.8692)">=</div>
<div class="t" style="left:1104.00px;top:772.84px;font-size:25px;-webkit-text-stroke:0.3px #212121;color:#72b2e4;transform:scaleX(1.0444)">var.vpc_cidr</div>
<div class="t" style="left:943.20px;top:802.84px;font-size:25px;-webkit-text-stroke:0.3px #212121;color:#72b2e4;transform:scaleX(0.7125)">}</div>
<div class="t" style="left:942.44px;top:862.84px;font-size:25px;-webkit-text-stroke:0.3px #212121;color:#72b2e4;transform:scaleX(1.0573)">resource</div>
<div class="t" style="left:1051.83px;top:862.84px;font-size:25px;-webkit-text-stroke:0.3px #212121;color:#d3987a;transform:scaleX(1.0660)">&quot;aws_subnet&quot;</div>
<div class="t" style="left:1219.81px;top:862.84px;font-size:25px;-webkit-text-stroke:0.3px #212121;color:#d3987a;transform:scaleX(0.9870)">&quot;snet1&quot;</div>
<div class="t" style="left:1303.60px;top:862.84px;font-size:25px;-webkit-text-stroke:0.3px #212121;color:#f5c518;transform:scaleX(1.0000)">{</div>
<div class="t" style="left:954.80px;top:892.84px;font-size:25px;-webkit-text-stroke:0.3px #212121;color:#72b2e4;transform:scaleX(1.0676)">vpc_id</div>
<div class="t" style="left:1145.51px;top:892.84px;font-size:25px;-webkit-text-stroke:0.3px #212121;color:#f0f0f0;transform:scaleX(0.8923)">=</div>
<div class="t" style="left:1164.83px;top:892.84px;font-size:25px;-webkit-text-stroke:0.3px #212121;color:#72b2e4;transform:scaleX(1.0665)">aws_vpc.default.id</div>
<div class="t" style="left:954.80px;top:922.84px;font-size:25px;-webkit-text-stroke:0.3px #212121;color:#72b2e4;transform:scaleX(1.0723)">tags</div>
<div class="t" style="left:1132.11px;top:922.84px;font-size:25px;-webkit-text-stroke:0.3px #212121;color:#f0f0f0;transform:scaleX(0.8923)">=</div>
<div class="t" style="left:1152.07px;top:922.84px;font-size:25px;-webkit-text-stroke:0.3px #212121;color:#3fcfb1;transform:scaleX(1.1275)">merge</div>
<div class="t" style="left:1230.49px;top:922.84px;font-size:25px;-webkit-text-stroke:0.3px #212121;color:#72b2e4;transform:scaleX(1.0083)">(var.tags, {})</div>
<div class="t" style="left:953.72px;top:952.84px;font-size:25px;-webkit-text-stroke:0.3px #212121;color:#72b2e4;transform:scaleX(1.0813)">map_public_ip_on_launch</div>
<div class="t" style="left:1274.40px;top:952.84px;font-size:25px;-webkit-text-stroke:0.3px #212121;color:#f0f0f0;transform:scaleX(0.9000)">=</div>
<div class="t" style="left:1294.50px;top:952.84px;font-size:25px;-webkit-text-stroke:0.3px #212121;color:#72b2e4;transform:scaleX(1.1349)">true</div>
<div class="t" style="left:953.71px;top:982.84px;font-size:25px;-webkit-text-stroke:0.3px #212121;color:#72b2e4;transform:scaleX(1.0884)">cidr_block</div>
<div class="t" style="left:1165.91px;top:982.84px;font-size:25px;-webkit-text-stroke:0.3px #212121;color:#f0f0f0;transform:scaleX(0.8923)">=</div>
<div class="t" style="left:1185.60px;top:982.84px;font-size:25px;-webkit-text-stroke:0.3px #212121;color:#72b2e4;transform:scaleX(1.0844)">var.subnets[</div>
<div class="t" style="left:1331.46px;top:982.84px;font-size:25px;-webkit-text-stroke:0.3px #212121;color:#c8c8c8;transform:scaleX(1.0417)">0</div>
<div class="t" style="left:1345.50px;top:982.84px;font-size:25px;-webkit-text-stroke:0.3px #212121;color:#72b2e4;transform:scaleX(0.9667)">]</div>
<div class="t" style="left:953.74px;top:1012.84px;font-size:25px;-webkit-text-stroke:0.3px #212121;color:#72b2e4;transform:scaleX(1.0648)">availability_zone</div>
<div class="t" style="left:1193.81px;top:1012.84px;font-size:25px;-webkit-text-stroke:0.3px #212121;color:#f0f0f0;transform:scaleX(0.8923)">=</div>
<div class="t" style="left:1212.99px;top:1012.84px;font-size:25px;-webkit-text-stroke:0.3px #212121;color:#d3987a;transform:scaleX(1.0075)">&quot;us-east-1a&quot;</div>
<div class="t" style="left:942.80px;top:1042.84px;font-size:25px;-webkit-text-stroke:0.3px #212121;color:#f5c518;transform:scaleX(0.7125)">}</div>
<div class="t" style="left:942.14px;top:1102.84px;font-size:25px;-webkit-text-stroke:0.3px #212121;color:#72b2e4;transform:scaleX(1.0604)">resource</div>
<div class="t" style="left:1051.83px;top:1102.84px;font-size:25px;-webkit-text-stroke:0.3px #212121;color:#72b2e4;transform:scaleX(1.0660)">&quot;aws_subnet&quot;</div>
<div class="t" style="left:1219.94px;top:1102.84px;font-size:25px;-webkit-text-stroke:0.3px #212121;color:#72b2e4;transform:scaleX(1.0636)">&quot;snet2&quot;</div>
<div class="t" style="left:1310.50px;top:1102.84px;font-size:25px;-webkit-text-stroke:0.3px #212121;color:#72b2e4;transform:scaleX(0.7875)">{</div>
<div class="t" style="left:942.14px;top:1132.84px;font-size:25px;-webkit-text-stroke:0.3px #212121;color:#3fcfb1;transform:scaleX(1.0604)">resource</div>
<div class="t" style="left:1051.87px;top:1132.84px;font-size:25px;-webkit-text-stroke:0.3px #212121;color:#d3987a;transform:scaleX(1.0272)">&quot;aws_vpc&quot;</div>
<div class="t" style="left:1177.10px;top:1132.84px;font-size:25px;-webkit-text-stroke:0.3px #212121;color:#d3987a;transform:scaleX(1.1011)">&quot;default&quot;</div>
<div class="t" style="left:1287.00px;top:1132.84px;font-size:25px;-webkit-text-stroke:0.3px #212121;color:#f5c518;transform:scaleX(0.8750)">{</div>
<div class="t" style="left:955.50px;top:1162.84px;font-size:25px;-webkit-text-stroke:0.3px #212121;color:#72b2e4;transform:scaleX(1.0745)">tags</div>
<div class="t" style="left:1050.41px;top:1162.84px;font-size:25px;-webkit-text-stroke:0.3px #212121;color:#f0f0f0;transform:scaleX(0.8923)">=</div>
<div class="t" style="left:1070.27px;top:1162.84px;font-size:25px;-webkit-text-stroke:0.3px #212121;color:#3fcfb1;transform:scaleX(1.1290)">merge</div>
<div class="t" style="left:1149.71px;top:1162.84px;font-size:25px;-webkit-text-stroke:0.3px #212121;color:#c678dd;transform:scaleX(0.7857)">(</div>
<div class="t" style="left:1158.70px;top:1162.84px;font-size:25px;-webkit-text-stroke:0.3px #212121;color:#72b2e4;transform:scaleX(1.0355)">var.tags,</div>
<div class="t" style="left:1263.30px;top:1162.84px;font-size:25px;-webkit-text-stroke:0.3px #212121;color:#72b2e4;transform:scaleX(0.8588)">{}</div>
<div class="t" style="left:1279.00px;top:1162.84px;font-size:25px;-webkit-text-stroke:0.3px #212121;color:#c678dd;transform:scaleX(0.7857)">)</div>
<div class="t" style="left:954.42px;top:1192.84px;font-size:25px;-webkit-text-stroke:0.3px #212121;color:#72b2e4;transform:scaleX(1.0848)">cidr_block</div>
<div class="t" style="left:1084.13px;top:1192.84px;font-size:25px;-webkit-text-stroke:0.3px #212121;color:#f0f0f0;transform:scaleX(0.8692)">=</div>
<div class="t" style="left:1104.00px;top:1192.84px;font-size:25px;-webkit-text-stroke:0.3px #212121;color:#72b2e4;transform:scaleX(1.0444)">var.vpc_cidr</div>
<div class="t" style="left:943.20px;top:1222.84px;font-size:25px;-webkit-text-stroke:0.3px #212121;color:#72b2e4;transform:scaleX(0.7125)">}</div>
<div class="t" style="left:942.44px;top:1282.84px;font-size:25px;-webkit-text-stroke:0.3px #212121;color:#72b2e4;transform:scaleX(1.0573)">resource</div>
<div class="t" style="left:1051.83px;top:1282.84px;font-size:25px;-webkit-text-stroke:0.3px #212121;color:#d3987a;transform:scaleX(1.0660)">&quot;aws_subnet&quot;</div>
<div class="t" style="left:1219.81px;top:1282.84px;font-size:25px;-webkit-text-stroke:0.3px #212121;color:#d3987a;transform:scaleX(0.9870)">&quot;snet1&quot;</div>
<div class="t" style="left:1303.60px;top:1282.84px;font-size:25px;-webkit-text-stroke:0.3px #212121;color:#f5c518;transform:scaleX(1.0000)">{</div>
<div class="t" style="left:954.80px;top:1312.84px;font-size:25px;-webkit-text-stroke:0.3px #212121;color:#72b2e4;transform:scaleX(1.0676)">vpc_id</div>
<div class="t" style="left:1145.51px;top:1312.84px;font-size:25px;-webkit-text-stroke:0.3px #212121;color:#f0f0f0;transform:scaleX(0.8923)">=</div>
<div class="t" style="left:1164.83px;top:1312.84px;font-size:25px;-webkit-text-stroke:0.3px #212121;color:#72b2e4;transform:scaleX(1.0665)">aws_vpc.default.id</div>
<div class="t" style="left:954.80px;top:1342.84px;font-size:25px;-webkit-text-stroke:0.3px #212121;color:#72b2e4;transform:scaleX(1.0723)">tags</div>
<div class="t" style="left:1132.11px;top:1342.84px;font-size:25px;-webkit-text-stroke:0.3px #212121;color:#f0f0f0;transform:scaleX(0.8923)">=</div>
<div class="t" style="left:1152.07px;top:1342.84px;font-size:25px;-webkit-text-stroke:0.3px #212121;color:#3fcfb1;transform:scaleX(1.1275)">merge</div>
<div class="t" style="left:1230.49px;top:1342.84px;font-size:25px;-webkit-text-stroke:0.3px #212121;color:#72b2e4;transform:scaleX(1.0083)">(var.tags, {})</div>
<div class="t" style="left:953.72px;top:1372.84px;font-size:25px;-webkit-text-stroke:0.3px #212121;color:#72b2e4;transform:scaleX(1.0813)">map_public_ip_on_launch</div>
<div class="t" style="left:1274.40px;top:1372.84px;font-size:25px;-webkit-text-stroke:0.3px #212121;color:#f0f0f0;transform:scaleX(0.9000)">=</div>
<div class="t" style="left:1294.50px;top:1372.84px;font-size:25px;-webkit-text-stroke:0.3px #212121;color:#72b2e4;transform:scaleX(1.1349)">true</div>
<div class="t" style="left:953.71px;top:1402.84px;font-size:25px;-webkit-text-stroke:0.3px #212121;color:#72b2e4;transform:scaleX(1.0884)">cidr_block</div>
<div class="t" style="left:1165.91px;top:1402.84px;font-size:25px;-webkit-text-stroke:0.3px #212121;color:#f0f0f0;transform:scaleX(0.8923)">=</div>
<div class="t" style="left:1185.60px;top:1402.84px;font-size:25px;-webkit-text-stroke:0.3px #212121;color:#72b2e4;transform:scaleX(1.0844)">var.subnets[</div>
<div class="t" style="left:1331.46px;top:1402.84px;font-size:25px;-webkit-text-stroke:0.3px #212121;color:#c8c8c8;transform:scaleX(1.0417)">0</div>
<div class="t" style="left:1345.50px;top:1402.84px;font-size:25px;-webkit-text-stroke:0.3px #212121;color:#72b2e4;transform:scaleX(0.9667)">]</div>
<div class="t" style="left:953.74px;top:1432.84px;font-size:25px;-webkit-text-stroke:0.3px #212121;color:#72b2e4;transform:scaleX(1.0648)">availability_zone</div>
<div class="t" style="left:1193.81px;top:1432.84px;font-size:25px;-webkit-text-stroke:0.3px #212121;color:#f0f0f0;transform:scaleX(0.8923)">=</div>
<div class="t" style="left:1212.99px;top:1432.84px;font-size:25px;-webkit-text-stroke:0.3px #212121;color:#d3987a;transform:scaleX(1.0075)">&quot;us-east-1a&quot;</div>
<div class="t" style="left:942.80px;top:1462.84px;font-size:25px;-webkit-text-stroke:0.3px #212121;color:#f5c518;transform:scaleX(0.7125)">}</div>
<div class="t" style="left:942.14px;top:1522.84px;font-size:25px;-webkit-text-stroke:0.3px #212121;color:#72b2e4;transform:scaleX(1.0604)">resource</div>
<div class="t" style="left:1051.83px;top:1522.84px;font-size:25px;-webkit-text-stroke:0.3px #212121;color:#72b2e4;transform:scaleX(1.0660)">&quot;aws_subnet&quot;</div>
<div class="t" style="left:1219.94px;top:1522.84px;font-size:25px;-webkit-text-stroke:0.3px #212121;color:#72b2e4;transform:scaleX(1.0636)">&quot;snet2&quot;</div>
<div class="t" style="left:1311.30px;top:1522.84px;font-size:25px;-webkit-text-stroke:0.3px #212121;color:#72b2e4;transform:scaleX(0.7875)">{</div>
<div class="t" style="left:1317.64px;top:1522.84px;font-size:25px;-webkit-text-stroke:0.3px #212121;color:#3fcfb1;transform:scaleX(1.0604)">resource</div>
<div class="t" style="left:1426.87px;top:1522.84px;font-size:25px;-webkit-text-stroke:0.3px #212121;color:#d3987a;transform:scaleX(1.0316)">&quot;aws_vpc&quot;</div>
<div class="t" style="left:1552.89px;top:1522.84px;font-size:25px;-webkit-text-stroke:0.3px #212121;color:#d3987a;transform:scaleX(1.1077)">&quot;default&quot;</div>
<div class="t" style="left:1661.00px;top:1522.84px;font-size:25px;-webkit-text-stroke:0.3px #212121;color:#f5c518;transform:scaleX(1.0625)">{</div>
<div class="t" style="left:955.50px;top:1552.84px;font-size:25px;-webkit-text-stroke:0.3px #212121;color:#72b2e4;transform:scaleX(1.0745)">tags</div>
<div class="t" style="left:1050.41px;top:1552.84px;font-size:25px;-webkit-text-stroke:0.3px #212121;color:#f0f0f0;transform:scaleX(0.8923)">=</div>
<div class="t" style="left:1070.27px;top:1552.84px;font-size:25px;-webkit-text-stroke:0.3px #212121;color:#3fcfb1;transform:scaleX(1.1290)">merge</div>
<div class="t" style="left:1149.71px;top:1552.84px;font-size:25px;-webkit-text-stroke:0.3px #212121;color:#c678dd;transform:scaleX(0.7857)">(</div>
<div class="t" style="left:1158.70px;top:1552.84px;font-size:25px;-webkit-text-stroke:0.3px #212121;color:#72b2e4;transform:scaleX(1.0355)">var.tags,</div>
<div class="t" style="left:1263.30px;top:1552.84px;font-size:25px;-webkit-text-stroke:0.3px #212121;color:#72b2e4;transform:scaleX(0.8588)">{}</div>
<div class="t" style="left:1279.00px;top:1552.84px;font-size:25px;-webkit-text-stroke:0.3px #212121;color:#c678dd;transform:scaleX(0.7857)">)</div>
<div class="t" style="left:954.42px;top:1582.84px;font-size:25px;-webkit-text-stroke:0.3px #212121;color:#72b2e4;transform:scaleX(1.0848)">cidr_block</div>
<div class="t" style="left:1084.13px;top:1582.84px;font-size:25px;-webkit-text-stroke:0.3px #212121;color:#f0f0f0;transform:scaleX(0.8692)">=</div>
<div class="t" style="left:1104.00px;top:1582.84px;font-size:25px;-webkit-text-stroke:0.3px #212121;color:#72b2e4;transform:scaleX(1.0444)">var.vpc_cidr</div>
<div class="t" style="left:943.20px;top:1612.84px;font-size:25px;-webkit-text-stroke:0.3px #212121;color:#72b2e4;transform:scaleX(0.7125)">}</div>
</body></html>
